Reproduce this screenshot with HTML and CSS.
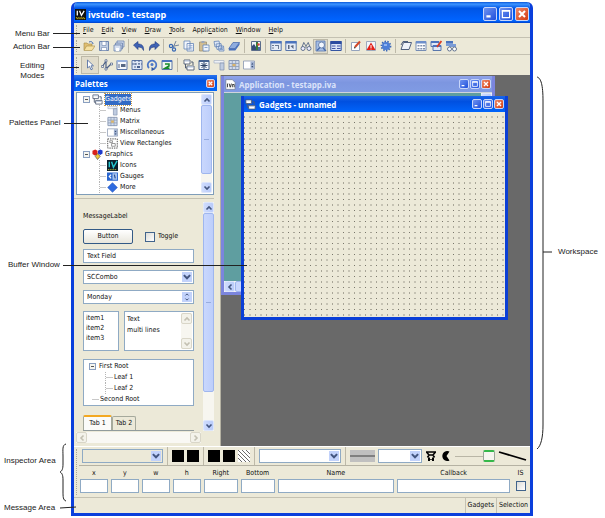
FILE: index.html
```html
<!DOCTYPE html>
<html lang="en">
<head>
  <meta charset="UTF-8">
  <title>ivstudio - testapp</title>
  <meta name="viewport" content="width=device-width, initial-scale=1.0">
  <link rel="stylesheet" href="styles.css">
</head>
<body>
  <!-- icon set -->
  <svg class="sprite" aria-hidden="true">
    <symbol id="i-logo" viewBox="0 0 12 12"><path fill="#111" d="M0 0h12v12H0z"/><path fill="none" stroke="#fff" stroke-width="1.4" d="M2.500 2v5M5 2l2 5 3-5"/><path stroke="#ffe21a" stroke-dasharray="1 1" d="M1 9.500h10M2 10.500h9"/></symbol>
    <symbol id="i-up" viewBox="0 0 8 8"><path fill="none" stroke="currentColor" stroke-width="1.600" d="M1.500 5.500L4 3l2.500 2.500"/></symbol>
    <symbol id="i-down" viewBox="0 0 8 8"><path fill="none" stroke="currentColor" stroke-width="1.600" d="M1.500 2.500L4 5l2.500-2.500"/></symbol>
    <symbol id="i-left" viewBox="0 0 8 8"><path fill="none" stroke="currentColor" stroke-width="1.600" d="M5.500 1.500L3 4l2.500 2.500"/></symbol>
    <symbol id="i-right" viewBox="0 0 8 8"><path fill="none" stroke="currentColor" stroke-width="1.600" d="M2.500 1.500L5 4 2.500 6.500"/></symbol>
    <symbol id="i-min" viewBox="0 0 10 10"><path stroke="#fff" stroke-width="1.800" d="M2 7h3.500"/></symbol>
    <symbol id="i-max" viewBox="0 0 10 10"><path fill="none" stroke="#fff" d="M2 2.500h6v5.500H2z"/><path stroke="#fff" stroke-width="1.400" d="M1.500 2.300h7"/></symbol>
    <symbol id="i-close" viewBox="0 0 10 10"><path stroke="#fff" stroke-width="1.700" d="M2.500 2.500l5 5M7.500 2.500l-5 5"/></symbol>

    <symbol id="i-open" viewBox="0 0 12 12"><path fill="#e0bf73" stroke="#a58945" stroke-width=".6" d="M1 10V3h3l1 1h4v2"/><path fill="#f6e1a2" stroke="#a58945" stroke-width=".6" d="M1 10.500L3.500 6H12l-3 4.500z"/><path fill="none" stroke="#4169b0" d="M6 2c2-1 4 0 4 2"/></symbol>
    <symbol id="i-save" viewBox="0 0 12 12"><path fill="#c2cfe3" stroke="#6d84ad" d="M1.500 1.500h9v9h-9z"/><path fill="#fff" stroke="#6d84ad" stroke-width=".6" d="M4 1.500h4v4H4zM3.500 7.500h5v3h-5z"/></symbol>
    <symbol id="i-saveall" viewBox="0 0 12 12"><path fill="#d5dff0" stroke="#6d84ad" stroke-width=".8" d="M4 1h7v6H4z"/><path fill="#bccae1" stroke="#6d84ad" stroke-width=".8" d="M2.500 3h7v6h-7z"/><path fill="#d5dff0" stroke="#6d84ad" stroke-width=".8" d="M1 5h7v6H1z"/><path fill="#fff" d="M3 8h3v3H3z"/></symbol>
    <symbol id="i-undo" viewBox="0 0 12 12"><path fill="#3e62b4" stroke="#233c80" stroke-width=".6" d="M0.500 5L5 1.500V4c4 0 6 2 5.500 6.500C9.500 8 8 7 5 7v2.500z"/></symbol>
    <symbol id="i-redo" viewBox="0 0 12 12"><path fill="#3e62b4" stroke="#233c80" stroke-width=".6" d="M11.500 5L7 1.500V4c-4 0-6 2-5.500 6.500C2.500 8 4 7 7 7v2.500z"/></symbol>
    <symbol id="i-cut" viewBox="0 0 12 12"><path stroke="#71839d" d="M8 1L5 8M11 5L4 6.500"/><circle cx="3" cy="6" r="1.600" fill="none" stroke="#3768b5" stroke-width="1.200"/><circle cx="6" cy="9.500" r="1.600" fill="none" stroke="#3768b5" stroke-width="1.200"/></symbol>
    <symbol id="i-copy" viewBox="0 0 12 12"><path fill="#f2f6fc" stroke="#6585b8" stroke-width=".8" d="M1 1h6v8H1zM4 3.500h6.500V11H4z"/><path stroke="#8ba6d0" stroke-width=".8" d="M5.500 5.500h4M5.500 7.300h4M5.500 9h4"/></symbol>
    <symbol id="i-paste" viewBox="0 0 12 12"><path fill="#d2bd91" stroke="#9a8a67" stroke-width=".7" d="M1.500 2h7v9h-7z"/><path fill="#9ba6b9" d="M3.500 1h3v2h-3z"/><path fill="#eef3fb" stroke="#6585b8" stroke-width=".8" d="M5 5h6v6H5z"/><path stroke="#8ba6d0" d="M6.500 7.500h3"/></symbol>
    <symbol id="i-dup" viewBox="0 0 12 12"><path fill="#dce6f6" stroke="#6585b8" stroke-width=".8" d="M1 1.500l5-.5 1 5-5 1zM3 4l5-.5 1 5-5 1zM5.500 6h5l.5 5H6z"/><path stroke="#6585b8" stroke-width=".7" d="M7 8h3M7 9.500h3"/></symbol>
    <symbol id="i-eraser" viewBox="0 0 12 12"><path fill="#8eacdf" stroke="#3d61a8" stroke-width=".7" d="M5 2.500h6.500L7 8.500H.8z"/><path fill="#466fbc" d="M.8 8.500H7l4.500-6v2.200L7.300 10.500H.8z"/></symbol>
    <symbol id="i-image" viewBox="0 0 12 12"><path fill="#eef2f8" stroke="#5b6d8b" d="M1.500 1.500h9v9h-9z"/><path fill="#344c79" d="M2 10V6l2-2 2 3v3z"/><path fill="#387c38" d="M6 2h2v8H6z"/><circle cx="8.500" cy="4.500" r="1.300" fill="#d94737"/><path fill="#4a6ca8" d="M8 7h2v3H8z"/></symbol>
    <symbol id="i-form" viewBox="0 0 12 12"><path fill="#e6ecf7" stroke="#5977ac" d="M.8 1.500h10.400v9H.8z"/><path fill="#4b73bd" d="M.5 1h11v2.500H.5z"/><path fill="#6b7a94" d="M2 5h2v1H2zM2 7.500h2v1H2zM5 5h4v4H8V6H5z"/></symbol>
    <symbol id="i-form2" viewBox="0 0 12 12"><path fill="#e6ecf7" stroke="#5977ac" d="M.8 1.500h10.400v9H.8z"/><path fill="#4b73bd" d="M.5 1h11v2.500H.5z"/><path fill="#59677f" d="M3 5h1.500v4H3zM5.500 6l3-1v4z"/></symbol>
    <symbol id="i-find" viewBox="0 0 12 12"><path fill="none" stroke="#64748f" d="M2 7l2-5M10 7L8 2M5 7h2M4 3l2 3 2-3"/><circle cx="3" cy="8.500" r="2" fill="#eef" stroke="#64748f"/><circle cx="9" cy="8.500" r="2" fill="#eef" stroke="#64748f"/></symbol>
    <symbol id="i-inspect" viewBox="0 0 12 12"><path fill="#a5bde4" stroke="#5878b0" stroke-width=".8" d="M1 1h9v10H1z"/><circle cx="6.500" cy="5" r="3" fill="#f2f7ff" stroke="#6b83aa"/><path stroke="#4a6ba8" stroke-width="1.300" d="M5 7.500l-3 3M8 8l3 3"/></symbol>
    <symbol id="i-panels" viewBox="0 0 12 12"><path fill="#dbe5f6" stroke="#3455a2" d="M.8 1.500h10.400v9H.8z"/><path fill="#2c4ca0" d="M.5 1h11v3H.5z"/><path fill="#4457a6" d="M2 5.500h3.500v1H2zM2 8h3.500v1H2zM7 5.500h3.500v1H7zM7 8h3.500v1H7z"/></symbol>
    <symbol id="i-edit" viewBox="0 0 12 12"><path fill="#fff" stroke="#94a3bd" d="M1.500 2.500h8v8h-8z"/><path stroke="#d24828" stroke-width="2" d="M5 7l5-5.500"/><path fill="#333" d="M4 8.500l.3-2L6 8z"/></symbol>
    <symbol id="i-alert" viewBox="0 0 12 12"><path fill="#f2f5fa" stroke="#9daabd" d="M1.500 1.500h9v9h-9z"/><path fill="#e32018" d="M6 2.500L10.500 10h-9z"/><path stroke="#fff" d="M6 5v3M6 8.600v.8"/></symbol>
    <symbol id="i-gear" viewBox="0 0 12 12"><circle cx="6" cy="6" r="4" fill="#4c7fd8"/><circle cx="6" cy="6" r="4.600" fill="none" stroke="#3b68b8" stroke-width="1.600" stroke-dasharray="1.500 1.300"/><path fill="#8fb3ee" d="M4 4h3v2H4z"/></symbol>
    <symbol id="i-box" viewBox="0 0 12 12"><path fill="#eef2fa" stroke="#50607e" d="M3.500 2.500h8L9 9.500H1z"/><path fill="none" stroke="#50607e" d="M1 5l2-3.500h5"/></symbol>
    <symbol id="i-grid" viewBox="0 0 12 12"><path fill="#fff" stroke="#758cb4" d="M1 1.500h10v9H1z"/><path fill="#6e8fca" d="M1 1h10v2.500H1z"/><path fill="#8191ad" d="M2.500 5h2v1.500h-2zM5.300 5h2v1.500h-2zM8 5h2v1.500H8zM2.500 8h2v1.500h-2zM5.300 8h2v1.500h-2zM8 8h2v1.500H8z"/></symbol>
    <symbol id="i-formedit" viewBox="0 0 12 12"><path fill="#dfe8f7" stroke="#5977ac" d="M1 1.500h8v5H1zM3 5.500h8v5H3z"/><path fill="#4b73bd" d="M1 1h8v2H1zM3 5h8v2H3z"/><path stroke="#dc3d22" stroke-width="1.800" d="M7 7l4.500-6"/></symbol>
    <symbol id="i-formfind" viewBox="0 0 12 12"><path fill="#4b73bd" d="M1 1h7v2H1z"/><path fill="#7b9cd6" d="M1 3h7v3H1zM4 4h7v3H4z"/><circle cx="4.500" cy="9" r="2" fill="#fff" stroke="#64748f"/><circle cx="9.500" cy="9" r="2" fill="#fff" stroke="#64748f"/></symbol>

    <symbol id="i-pointer" viewBox="0 0 12 12"><path fill="#fff" stroke="#5873a5" stroke-width=".9" d="M3.500 1v8l2-1.700L7 10.800l1.500-.7L7 6.800h2.500z"/></symbol>
    <symbol id="i-poly" viewBox="0 0 12 12"><path fill="none" stroke="#4c6086" stroke-width="1.200" d="M1.500 7.500L5 2v8l5-5"/><path fill="#fff" stroke="#4c6086" stroke-width=".7" d="M.6 6.500h2v2h-2zM4 .8h2v2H4zM4 9h2v2H4zM9.500 4h2v2h-2z"/></symbol>
    <symbol id="i-attach" viewBox="0 0 12 12"><path fill="#f6f8fc" stroke="#5c77a8" d="M1 1.500h10v9H1z"/><path fill="#9ab2dc" d="M1 1h10v2H1z"/><path fill="#566784" d="M2.500 5h1v4h-1zM5 5h4.500v3H5z"/></symbol>
    <symbol id="i-guide" viewBox="0 0 12 12"><path fill="#dfe7f5" stroke="#5c77a8" d="M1 1.500h10v9H1z"/><path stroke="#4b628f" stroke-dasharray="2 1" d="M4 1v10M1 5h10M8 1v4"/><path fill="#4b628f" d="M6 7h3v2H6z"/></symbol>
    <symbol id="i-focus" viewBox="0 0 12 12"><path fill="none" stroke="#4d77c6" stroke-width="1.800" d="M3 9a4.300 4.300 0 1 1 5 .8"/><path fill="#2f57a5" d="M5.500 8v4l3.500-1.700z"/><circle cx="6" cy="5.500" r="1.500" fill="#4d77c6"/></symbol>
    <symbol id="i-two" viewBox="0 0 12 12"><path fill="#f0f6ef" stroke="#5c77a8" d="M1 1.500h10v9H1z"/><path fill="#4b73bd" d="M1 1h10v2H1z"/><path fill="none" stroke="#168a2b" stroke-width="1.500" d="M4 5h4v2L4 9.300h4.500"/></symbol>
    <symbol id="i-gadgets" viewBox="0 0 12 12"><path fill="#fff" stroke="#515e74" stroke-width=".9" d="M1 1h6v4H1zM4 7h7v4H4z"/><path fill="#aebfd9" d="M1.500 1.500h5v1h-5zM4.500 7.500h6v1h-6z"/><path fill="none" stroke="#515e74" d="M8 3h2v3M2.500 5v4H4"/></symbol>
    <symbol id="i-spark" viewBox="0 0 12 12"><path fill="#f3f6fb" stroke="#46628f" d="M1 1.500h10v9H1z"/><path fill="#46628f" d="M1 1h10v2H1z"/><path stroke="#2f4468" d="M6 3v7M2.500 6.500h7M3.500 4l5 5M8.500 4l-5 5"/></symbol>
    <symbol id="i-menus" viewBox="0 0 12 12"><path fill="#eef1f6" stroke="#a8b3c5" stroke-width=".7" d="M1 1.500h10V4H1z"/><path fill="#bfcce1" stroke="#8191ad" stroke-width=".7" d="M7 4h4v7H7z"/></symbol>
    <symbol id="i-matrix" viewBox="0 0 12 12"><path fill="#d2ddee" stroke="#8b9ab4" d="M1 1.500h10v9H1z"/><path stroke="#8b9ab4" stroke-width=".8" d="M4.300 1v10M7.700 1v10M1 4.500h10M1 7.500h10"/><path fill="#dbb469" d="M4.500 5h3v2.300h-3z"/></symbol>
    <symbol id="i-misc" viewBox="0 0 12 12"><path fill="#fff" stroke="#8896b0" stroke-width=".8" d="M.5 2h11v8H.5z"/><path fill="#9fb0d0" d="M7.500 2.500h3.500v7H7.500z"/><path fill="#304569" d="M8.300 5.500L9.300 4l1 1.500zM8.300 7l1 1.500 1-1.500z"/></symbol>
    <symbol id="i-rects" viewBox="0 0 12 12"><path fill="none" stroke="#444" stroke-dasharray="1.500 1" d="M.8 1h10.400v10H.8z"/><path fill="#fff" stroke="#777" stroke-width=".8" d="M3 3h3v2H3zM5 6h4v3H5z"/></symbol>
    <symbol id="i-shapes" viewBox="0 0 12 12"><path fill="#d9231b" d="M.5 2l3-1.500L6 2v4L3 7 .5 5.500z"/><path fill="#1f3ccc" d="M6.500 2L9 .5l2.500 1V5L9 6.500 6.500 5z"/><path fill="#f0c83a" stroke="#333" stroke-width=".6" d="M6 5l3 3-3 3.500L3.500 8z"/></symbol>
    <symbol id="i-icons" viewBox="0 0 12 12"><path fill="#0b1f2c" d="M0 0h12v12H0z"/><path fill="none" stroke="#25c7d0" stroke-width="1.500" d="M2.500 2v6M5 2l2 6 4-7"/><path stroke="#e8e23a" stroke-dasharray="1 1" d="M1 10.500h10"/></symbol>
    <symbol id="i-gauge" viewBox="0 0 12 12"><path fill="#2a66cf" d="M0 1.500h12v9H0z"/><path fill="#a8c5f0" d="M6 2.500h5v7H6z"/><path fill="none" stroke="#fff" stroke-width="1.300" d="M4.500 4L2.500 6l2 2"/><path stroke="#2a4c90" stroke-width="1.300" d="M8 4l1 4"/></symbol>
    <symbol id="i-more" viewBox="0 0 12 12"><path fill="#2e6be0" stroke="#1b4eb5" stroke-width=".6" d="M6 .7L11.300 6 6 11.300.7 6z"/></symbol>
    <symbol id="i-doc" viewBox="0 0 12 12"><path fill="#fff" stroke="#707a8c" stroke-width=".7" d="M1 .7h7l3 3v7.600H1z"/><path fill="none" stroke="#333" d="M2.700 5v4M4.500 5l1.200 4L7 5M8 9V6h2v3"/></symbol>
  </svg>

  <div class="figure">
    <div class="captions"></div>

    <div class="app">
      <header class="titlebar">
        <svg class="ico"><use href="#i-logo"/></svg>
        <h1>ivstudio - testapp</h1>
        <div class="winbtns big">
          <button aria-label="Minimize"><svg><use href="#i-min"/></svg></button>
          <button aria-label="Maximize"><svg><use href="#i-max"/></svg></button>
          <button class="close" aria-label="Close"><svg><use href="#i-close"/></svg></button>
        </div>
      </header>

      <nav class="bar menubar">
        <span class="grip"></span>
        <button><u>F</u>ile</button>
        <button><u>E</u>dit</button>
        <button><u>V</u>iew</button>
        <button><u>D</u>raw</button>
        <button><u>T</u>ools</button>
        <button>Appli<u>c</u>ation</button>
        <button><u>W</u>indow</button>
        <button><u>H</u>elp</button>
      </nav>

      <div class="bar actions">
        <span class="grip"></span>
        <button aria-label="Open"><svg><use href="#i-open"/></svg></button>
        <button aria-label="Save"><svg><use href="#i-save"/></svg></button>
        <button aria-label="Save all"><svg><use href="#i-saveall"/></svg></button>
        <span class="sep"></span>
        <button aria-label="Undo"><svg><use href="#i-undo"/></svg></button>
        <button aria-label="Redo"><svg><use href="#i-redo"/></svg></button>
        <span class="sep"></span>
        <button aria-label="Cut"><svg><use href="#i-cut"/></svg></button>
        <button aria-label="Copy"><svg><use href="#i-copy"/></svg></button>
        <button aria-label="Paste"><svg><use href="#i-paste"/></svg></button>
        <button aria-label="Duplicate"><svg><use href="#i-dup"/></svg></button>
        <button aria-label="Delete"><svg><use href="#i-eraser"/></svg></button>
        <span class="sep wide"></span>
        <button aria-label="Image"><svg><use href="#i-image"/></svg></button>
        <span class="sep"></span>
        <button aria-label="Gadget palette"><svg><use href="#i-form"/></svg></button>
        <button aria-label="Inspector"><svg><use href="#i-form2"/></svg></button>
        <button aria-label="Find"><svg><use href="#i-find"/></svg></button>
        <button class="on" aria-label="Zoom"><svg><use href="#i-inspect"/></svg></button>
        <button aria-label="Panels"><svg><use href="#i-panels"/></svg></button>
        <span class="sep"></span>
        <button aria-label="Edit"><svg><use href="#i-edit"/></svg></button>
        <button aria-label="Errors"><svg><use href="#i-alert"/></svg></button>
        <button aria-label="Generate"><svg><use href="#i-gear"/></svg></button>
        <span class="sep"></span>
        <button aria-label="New panel"><svg><use href="#i-box"/></svg></button>
        <button aria-label="Grid"><svg><use href="#i-grid"/></svg></button>
        <button aria-label="Edit panel"><svg><use href="#i-formedit"/></svg></button>
        <button aria-label="Find panel"><svg><use href="#i-formfind"/></svg></button>
      </div>

      <div class="bar modes">
        <span class="grip"></span>
        <button class="on" aria-label="Selection"><svg><use href="#i-pointer"/></svg></button>
        <button aria-label="Polyline"><svg><use href="#i-poly"/></svg></button>
        <button aria-label="Attachments"><svg><use href="#i-attach"/></svg></button>
        <button aria-label="Guides"><svg><use href="#i-guide"/></svg></button>
        <button aria-label="Focus"><svg><use href="#i-focus"/></svg></button>
        <button aria-label="Order"><svg><use href="#i-two"/></svg></button>
        <span class="sep wide"></span>
        <button aria-label="Gadgets"><svg><use href="#i-gadgets"/></svg></button>
        <button aria-label="Connections"><svg><use href="#i-spark"/></svg></button>
        <button aria-label="Menus"><svg><use href="#i-menus"/></svg></button>
        <button aria-label="Matrix"><svg><use href="#i-matrix"/></svg></button>
        <button aria-label="Miscellaneous"><svg><use href="#i-misc"/></svg></button>
      </div>

      <div class="main">
        <aside class="palettes">
          <div class="pal-title">
            <h2>Palettes</h2>
            <button class="close" aria-label="Close palettes"><svg><use href="#i-close"/></svg></button>
          </div>

          <div class="tree-box">
            <ul class="tree">
              <li><i class="toggle"></i><svg><use href="#i-gadgets"/></svg><span class="sel">Gadgets</span></li>
              <li class="child"><svg><use href="#i-menus"/></svg>Menus</li>
              <li class="child"><svg><use href="#i-matrix"/></svg>Matrix</li>
              <li class="child"><svg><use href="#i-misc"/></svg>Miscellaneous</li>
              <li class="child"><svg><use href="#i-rects"/></svg>View Rectangles</li>
              <li><i class="toggle"></i><svg><use href="#i-shapes"/></svg><span>Graphics</span></li>
              <li class="child"><svg><use href="#i-icons"/></svg>Icons</li>
              <li class="child"><svg><use href="#i-gauge"/></svg>Gauges</li>
              <li class="child"><svg><use href="#i-more"/></svg>More</li>
            </ul>
            <div class="vscroll">
              <button aria-label="Scroll up"><svg><use href="#i-up"/></svg></button>
              <span class="thumb"></span>
              <button aria-label="Scroll down"><svg><use href="#i-down"/></svg></button>
            </div>
          </div>

          <div class="preview">
            <div class="samples">
              <p>MessageLabel</p>
              <div class="row">
                <button class="push">Button</button>
                <label class="check"><input type="checkbox">Toggle</label>
              </div>
              <input class="field" type="text" value="Text Field" aria-label="Text field">
              <div class="combo">
                <select aria-label="Combo"><option>SCCombo</option></select>
                <svg><use href="#i-down"/></svg>
              </div>
              <div class="combo spin">
                <input type="text" value="Monday" aria-label="Day">
                <span><svg><use href="#i-up"/></svg><svg><use href="#i-down"/></svg></span>
              </div>
              <div class="row lists">
                <ul class="list"><li>item1</li><li>item2</li><li>item3</li></ul>
                <div class="multi">
                  <textarea aria-label="Text">Text
multi lines</textarea>
                  <div class="vscroll off">
                    <button aria-label="Scroll up"><svg><use href="#i-up"/></svg></button>
                    <button aria-label="Scroll down"><svg><use href="#i-down"/></svg></button>
                  </div>
                </div>
              </div>
              <ul class="roots">
                <li><i class="toggle"></i>First Root</li>
                <li class="leaf">Leaf 1</li>
                <li class="leaf">Leaf 2</li>
                <li class="last">Second Root</li>
              </ul>
              <div class="tabs">
                <button class="active">Tab 1</button>
                <button>Tab 2</button>
              </div>
              <div class="tab-page"></div>
            </div>
            <div class="vscroll">
              <button aria-label="Scroll up"><svg><use href="#i-up"/></svg></button>
              <span class="thumb long"></span>
              <button aria-label="Scroll down"><svg><use href="#i-down"/></svg></button>
            </div>
          </div>
          <div class="hscroll off">
            <button aria-label="Scroll left"><svg><use href="#i-left"/></svg></button>
            <button aria-label="Scroll right"><svg><use href="#i-right"/></svg></button>
          </div>
        </aside>

        <main class="workspace">
          <section class="win inactive">
            <div class="win-title">
              <svg class="ico"><use href="#i-doc"/></svg>
              <h2>Application - testapp.iva</h2>
              <div class="winbtns">
                <button aria-label="Minimize"><svg><use href="#i-min"/></svg></button>
                <button aria-label="Maximize"><svg><use href="#i-max"/></svg></button>
                <button class="close" aria-label="Close"><svg><use href="#i-close"/></svg></button>
              </div>
            </div>
            <div class="win-body">
              <div class="teal"></div>
              <div class="vscroll">
                <button aria-label="Scroll up"><svg><use href="#i-up"/></svg></button>
                <span class="thumb"></span>
              </div>
            </div>
            <div class="hscroll">
              <button aria-label="Scroll left"><svg><use href="#i-left"/></svg></button>
              <span class="thumb"></span>
            </div>
          </section>

          <section class="win active">
            <div class="win-title">
              <svg class="ico"><use href="#i-gadgets"/></svg>
              <h2>Gadgets - unnamed</h2>
              <div class="winbtns">
                <button aria-label="Minimize"><svg><use href="#i-min"/></svg></button>
                <button aria-label="Maximize"><svg><use href="#i-max"/></svg></button>
                <button class="close" aria-label="Close"><svg><use href="#i-close"/></svg></button>
              </div>
            </div>
            <svg class="dots">
              <defs>
                <pattern id="grid" width="11" height="11" patternUnits="userSpaceOnUse">
                  <path fill="#77756a" d="M0 10h1v1H0z"/>
                  <path fill="#a9a698" d="M5 10h2v1H5zM0 4h1v2H0z"/>
                  <path fill="#c6c3b4" d="M5 4h2v2H5z"/>
                </pattern>
              </defs>
              <rect width="100%" height="100%" fill="url(#grid)"/>
            </svg>
          </section>
        </main>
      </div>

      <div class="inspector">
        <span class="grip"></span>
        <div class="props">
          <div class="attrs">
            <div class="combo gray"><select aria-label="Font"><option></option></select><svg><use href="#i-down"/></svg></div>
            <span class="sep"></span>
            <button class="swatch" aria-label="Foreground"></button>
            <button class="swatch" aria-label="Background"></button>
            <span class="sep"></span>
            <button class="swatch" aria-label="Line color"></button>
            <button class="swatch" aria-label="Fill color"></button>
            <button class="swatch hatch" aria-label="Pattern"><svg viewBox="0 0 12 12"><path stroke="#444" stroke-width=".8" d="M0 0l12 12M4 0l8 8M8 0l4 4M0 4l8 8M0 8l4 4"/></svg></button>
            <span class="sep"></span>
            <div class="combo"><select aria-label="Pattern name"><option></option></select><svg><use href="#i-down"/></svg></div>
            <span class="sep"></span>
            <button class="linestyle" aria-label="Line style"><i></i></button>
            <div class="combo narrow"><select aria-label="Line width"><option></option></select><svg><use href="#i-down"/></svg></div>
            <button class="shape" aria-label="Fill rule"><svg viewBox="0 0 12 12"><path fill="none" stroke="#000" stroke-width="1.600" d="M1 2h10M1.500 2L4 5h4l2.500-3M4 5L2.500 7.500M8 5l1.500 2.500"/><path fill="#000" d="M3 7.500h2V9h2V7.500h2V11H7V9.800H5V11H3z"/></svg></button>
            <button class="shape" aria-label="Arc mode"><svg viewBox="0 0 12 12"><path fill="#000" d="M9.500 1.500A5 5 0 1 0 9.500 10.500L6.500 6z"/></svg></button>
            <input class="slider" type="range" min="0" max="100" value="100" aria-label="Alpha">
            <svg class="line" viewBox="0 0 29 12"><path stroke="#000" stroke-width="1.800" d="M1 2l27 8"/></svg>
          </div>
          <div class="coords">
            <label>x<input type="text"></label>
            <label>y<input type="text"></label>
            <label>w<input type="text"></label>
            <label>h<input type="text"></label>
            <label>Right<input type="text"></label>
            <label>Bottom<input type="text"></label>
            <label>Name<input type="text"></label>
            <label>Callback<input type="text"></label>
            <label>IS<input type="checkbox"></label>
          </div>
        </div>
      </div>

      <footer class="status">
        <span class="msg"></span>
        <span>Gadgets</span>
        <span>Selection</span>
      </footer>
    </div>

    <div class="captions right">
      <svg class="brace-right" viewBox="0 0 20 376"><path d="M4 2C8 3 10 10 10 26V350C10 362 8 371 4 374M10 177h9"/></svg>
      <span class="note workspace-note">Workspace</span>
    </div>

    <!-- callouts drawn over the window -->
    <span class="note n-menu">Menu Bar</span>
    <span class="note n-action">Action Bar</span>
    <span class="note n-modes">Editing<br>Modes</span>
    <span class="note n-palettes">Palettes Panel</span>
    <span class="note n-buffer">Buffer Window</span>
    <span class="note n-inspector">Inspector Area</span>
    <span class="note n-message">Message Area</span>
    <svg class="leaders top" viewBox="0 0 250 270"><path d="M53 33.500h27M53 47.500h27M61 67.500h18M64 123.500h24M63 265.500h184"/></svg>
    <svg class="leaders bottom" viewBox="0 0 80 80"><path d="M66 6C62 7 63 12 63 18V26C63 31 62 33 60 34C62 35 63 37 63 42V53C63 59 63 62 66 63M60 70l16-1"/></svg>
  </div>
</body>
</html>
```
FILE: styles.css
```css
* {
  box-sizing: border-box;
}

body {
  margin: 0;
  background: #fff;
  color: #111;
  font-family: "DejaVu Sans Condensed", "DejaVu Sans", sans-serif;
  font-size: 7px;
  line-height: 11px;
}

button, input, select, textarea {
  font: inherit;
  color: inherit;
  margin: 0;
  padding: 0;
  border: none;
  background: none;
  border-radius: 0;
  min-width: 0;
}

h1, h2, p, ul {
  margin: 0;
  padding: 0;
  list-style: none;
}

.sprite {
  position: absolute;
  width: 0;
  height: 0;
}

.figure {
  position: relative;
  display: grid;
  grid-template-columns: 71px 1fr 72px;
  height: 100vh;
  min-height: 400px;
  padding: 2px 0;
}

/* main window */
.app {
  display: flex;
  flex-direction: column;
  min-width: 0;
  min-height: 0;
  background: #ece9d8;
  border: 3px solid #0a3fdc;
  border-top: none;
  border-radius: 6px 6px 0 0;
  overflow: hidden;
}

.titlebar {
  display: flex;
  align-items: center;
  gap: 2px;
  height: 21px;
  flex: none;
  padding: 3px 1px 0 1px;
  background: linear-gradient(#0a57d8, #3d94ff 10%, #0055e5 30%, #0060fa 75%, #0066ff 90%, #0040c8);
  color: #fff;
}

h1, h2 {
  flex: 1;
  font-family: "Open Sans", "DejaVu Sans", sans-serif;
  font-size: 8px;
  font-weight: bold;
  white-space: nowrap;
}

.titlebar h1 {
  font-size: 9px;
}

.ico {
  width: 11px;
  height: 11px;
  flex: none;
}

.winbtns {
  display: flex;
  gap: 1px;
}

.winbtns button, .close {
  display: flex;
  width: 10px;
  height: 10px;
  border: 1px solid #c8d6fa;
  border-radius: 2px;
  background: linear-gradient(135deg, #6f93f0, #1f4fdc);
}

.winbtns svg, .close svg {
  width: 100%;
  height: 100%;
}

.winbtns .close, .close {
  background: linear-gradient(135deg, #f08a68, #d33c12);
}

.winbtns.big {
  gap: 2px;
}

.winbtns.big button {
  width: 14px;
  height: 14px;
}

/* bars */
.bar {
  display: flex;
  align-items: center;
  flex: none;
  padding-left: 2px;
  border-bottom: 1px solid #c4c1b2;
}

.grip {
  width: 2px;
  align-self: stretch;
  margin: 2px 3px 2px 0;
  border-left: 1px dotted #aca899;
}

.menubar {
  height: 15px;
  gap: 8px;
}

.menubar .grip {
  margin-right: -3px;
}

.actions {
  height: 17px;
}

.modes {
  height: 20px;
  border-bottom: none;
}

.actions button, .modes button {
  display: flex;
  align-items: center;
  justify-content: center;
  width: 15px;
  height: 15px;
}

.bar svg {
  width: 12px;
  height: 12px;
}

.bar button.on {
  background: #e1dccb;
  border: 1px solid #bdb9a8;
}

.modes button.on {
  width: 18px;
  height: 18px;
}

.sep {
  flex: none;
  width: 1px;
  height: 14px;
  margin: 0 2px;
  background: #bdb9a8;
}

.sep.wide {
  margin: 0 3px;
}

/* palettes */
.main {
  display: flex;
  flex: 1;
  min-height: 0;
}

.palettes {
  display: flex;
  flex-direction: column;
  width: 147px;
  flex: none;
  min-height: 0;
  border-right: 1px solid #b5b2a3;
}

.pal-title {
  display: flex;
  align-items: center;
  height: 16px;
  flex: none;
  margin-right: 3px;
  padding: 0 2px 0 1px;
  background: linear-gradient(#2b74ee, #0053e0 35%, #0064fa);
  color: #fff;
}

.pal-title .close {
  width: 9px;
  height: 9px;
}

.tree-box {
  display: flex;
  flex: none;
  height: 103px;
  margin: 1px 6px 3px 2px;
  padding: 1px;
  border: 1px solid #7f9db9;
  background: #fff;
}

.tree {
  flex: 1;
  padding-left: 5px;
}

.tree li {
  display: flex;
  align-items: center;
  gap: 2px;
  height: 11px;
  white-space: nowrap;
}

.tree svg {
  width: 11px;
  height: 11px;
}

.tree .child {
  margin-left: 16px;
  padding-left: 7px;
  border-left: 1px dotted #b5b5b5;
  background: linear-gradient(90deg, #c8c8c8 6px, transparent 6px) 0 5px / 100% 1px no-repeat;
}

.tree .sel {
  background: #316ac5;
  color: #fff;
  outline: 1px dotted #c89b4a;
}

.toggle {
  width: 7px;
  height: 7px;
  border: 1px solid #8a9fc0;
  background: linear-gradient(#555, #555) center / 3px 1px no-repeat #f5f5f0;
}

.vscroll {
  display: flex;
  flex-direction: column;
  justify-content: space-between;
  width: 11px;
  flex: none;
  background: #f7f6f0;
}

.vscroll button, .hscroll button, .thumb {
  display: flex;
  align-items: center;
  justify-content: center;
  flex: none;
  width: 11px;
  height: 11px;
  border: 1px solid #dde6fc;
  border-radius: 2px;
  background: linear-gradient(90deg, #cfdcfd, #b9cbfa);
  color: #43557f;
}

.vscroll svg, .hscroll svg {
  width: 8px;
  height: 8px;
}

.thumb {
  height: auto;
  flex: 1;
  border-color: #9fb6ee;
  background: linear-gradient(#97acdf, #97acdf) center / 5px 1px no-repeat, linear-gradient(90deg, #c9d7fd, #bdcefb);
}

.tree-box .thumb {
  flex: 0 1 69px;
  margin-bottom: auto;
}

.vscroll.off button, .hscroll.off button {
  background: #f3f2ea;
  border-color: #d9d6c8;
  color: #c3c0b2;
}

.preview {
  display: flex;
  flex: 1;
  min-height: 0;
  margin-right: 6px;
  padding-top: 3px;
  border-top: 1px solid #c4c1b2;
}

.thumb.long {
  flex: 0 1 78%;
  margin-bottom: auto;
}

.samples {
  flex: 1;
  min-width: 0;
  overflow: hidden;
  padding: 9px 9px 0 9px;
}

.row {
  display: flex;
  align-items: center;
  gap: 12px;
  margin: 7px 0 5px;
}

.push {
  width: 50px;
  height: 15px;
  border: 1px solid #335a86;
  border-radius: 2px;
  background: linear-gradient(#fff, #e8e6dc);
}

.check {
  display: flex;
  align-items: center;
  gap: 3px;
}

input[type="checkbox"] {
  appearance: none;
  width: 10px;
  height: 10px;
  border: 1px solid #41648c;
  background: linear-gradient(135deg, #dcdcd7, #fff);
}

.field, .combo, .list, .multi, .roots, .coords input[type="text"] {
  display: block;
  width: 100%;
  border: 1px solid #8faac4;
  background: #fff;
}

.field {
  height: 14px;
  padding: 0 3px;
}

.combo {
  display: flex;
  align-items: center;
  height: 14px;
  padding: 0 1px 0 3px;
}

.samples .combo {
  margin-top: 7px;
}

.samples .spin {
  margin-top: 6px;
}

.combo select, .combo input {
  flex: 1;
  width: 0;
  appearance: none;
}

.combo > svg, .combo > span {
  flex: none;
  width: 10px;
  height: 10px;
  background: #c2d2fb;
  color: #43557f;
}

.combo > span {
  display: flex;
  flex-direction: column;
}

.combo > span svg {
  width: 10px;
  height: 5px;
}

.lists {
  align-items: stretch;
  gap: 5px;
  height: 40px;
  margin: 7px 0 8px;
}

.list {
  width: 36px;
  flex: none;
  padding: 1px 2px;
  line-height: 10px;
}

.multi {
  display: flex;
  flex: 1;
  padding: 1px;
}

.multi textarea {
  flex: 1;
  width: 0;
  padding: 1px;
  resize: none;
  overflow: hidden;
}

.roots {
  height: 47px;
  padding: 1px 4px;
}

.roots li {
  display: flex;
  align-items: center;
  gap: 3px;
  height: 11px;
}

.roots .toggle {
  margin-left: 1px;
}

.roots .leaf {
  margin-left: 17px;
  padding-left: 8px;
  border-left: 1px dotted #b5b5b5;
  background: linear-gradient(90deg, #c8c8c8 7px, transparent 7px) 0 5px / 100% 1px no-repeat;
}

.roots .last {
  margin-left: 4px;
  padding-left: 8px;
  background: linear-gradient(90deg, #c8c8c8 7px, transparent 7px) 0 5px / 100% 1px no-repeat;
}

.tabs {
  display: flex;
  align-items: flex-end;
  margin-top: 9px;
}

.tabs button {
  width: 24px;
  height: 14px;
  border: 1px solid #a5a99c;
  border-bottom: none;
  border-radius: 2px 2px 0 0;
}

.tabs .active {
  width: 29px;
  height: 15px;
  border-top: 2px solid #f3a821;
  background: #fbfbf9;
}

.tab-page {
  height: 20px;
  border: 1px solid #919b9c;
  background: #fbfbf9;
}

.hscroll {
  display: flex;
  justify-content: space-between;
  flex: none;
  height: 11px;
  background: #f9f8f4;
}

.palettes > .hscroll {
  margin: 1px 19px 3px 2px;
}

/* workspace */
.workspace {
  position: relative;
  flex: 1;
  min-width: 0;
  background: #696969;
  overflow: hidden;
}

.win {
  position: absolute;
  display: flex;
  flex-direction: column;
}

.win.inactive {
  top: 1px;
  left: 0;
  width: 274px;
  height: 219px;
  border: 3px solid #7b85dd;
  border-top: none;
}

.win.active {
  top: 21px;
  left: 20px;
  width: 267px;
  height: 224px;
  border: 3px solid #0b3fd6;
  border-top: none;
  background: #ece9d8;
}

.win-title {
  display: flex;
  align-items: center;
  gap: 3px;
  height: 16px;
  flex: none;
  padding: 0 1px;
  color: #fff;
}

.active .win-title {
  background: linear-gradient(#1c66e8, #0050e0 35%, #0064fa);
}

.inactive .win-title {
  background: linear-gradient(#8fa3ea, #7d96e0 40%, #809be4);
  color: #dbe3fa;
}

.win-body {
  display: flex;
  flex: 1;
  border-top: 1px solid #cfd4dc;
}

.teal {
  flex: 1;
  background: #5f9ea0;
}

.dots {
  flex: 1;
  width: 100%;
  min-height: 0;
}

/* inspector */
.inspector {
  display: flex;
  flex: none;
  padding-left: 2px;
  border-top: 1px solid #fff;
  border-bottom: 1px solid #c4c1b2;
}

.inspector > .grip {
  margin-right: 1px;
}

.props {
  flex: 1;
  min-width: 0;
}

.attrs {
  display: flex;
  align-items: center;
  gap: 3px;
  height: 19px;
  padding: 0 3px;
  border-bottom: 1px solid #b5b2a3;
}

.attrs .combo {
  flex: 83 1 0;
  width: auto;
  min-width: 0;
}

.attrs .combo.gray {
  background: #ece9d8;
}

.attrs .combo.narrow {
  flex: 42 1 0;
}

.attrs .sep {
  height: 18px;
  margin: 0 1px;
}

.swatch {
  width: 12px;
  height: 12px;
  flex: none;
  background: #000;
}

.hatch {
  display: flex;
  background: #fff;
}

.linestyle {
  display: flex;
  align-items: center;
  width: 25px;
  height: 12px;
  flex: none;
  background: #c0c0c0;
}

.linestyle i {
  flex: 1;
  height: 2px;
  background: #808080;
}

.shape {
  display: flex;
  width: 12px;
  height: 12px;
  flex: none;
}

.slider {
  appearance: none;
  width: 40px;
  height: 12px;
  flex: none;
  background: linear-gradient(#b9b6a6, #b9b6a6) center / 100% 1px no-repeat;
}

.slider::-webkit-slider-thumb {
  appearance: none;
  width: 12px;
  height: 12px;
  border: 1px solid #9aa69a;
  border-top: 2px solid #35b84a;
  border-bottom: 2px solid #35b84a;
  border-radius: 2px;
  background: #f6f5ef;
}

.line {
  width: 29px;
  height: 12px;
  flex: none;
}

.coords {
  display: grid;
  grid-template-columns: 28fr 28fr 28fr 28fr 34fr 34fr 117fr 113fr 15px;
  gap: 3px;
  padding: 2px 2px 4px 1px;
}

.coords label {
  display: flex;
  flex-direction: column;
  align-items: center;
  min-width: 0;
}

.coords input[type="text"] {
  height: 14px;
}

.coords input[type="checkbox"] {
  margin-top: 2px;
}

.status {
  display: flex;
  flex: none;
  height: 15px;
  line-height: 15px;
}

.status span {
  padding: 0 2px;
  border-left: 1px solid #c4c1b2;
}

.status .msg {
  flex: 1;
  border-left: none;
}

/* callouts */
.captions {
  position: relative;
}

.note {
  position: absolute;
  font-family: "Liberation Sans", Arial, sans-serif;
  font-size: 8px;
  line-height: 10px;
  color: #222;
  white-space: nowrap;
}

.n-menu { top: 29px; left: 15px; }
.n-action { top: 42px; left: 13px; }
.n-modes { top: 61px; left: 20px; text-align: center; }
.n-palettes { top: 118px; left: 9px; }
.n-buffer { top: 260px; left: 8px; }
.n-inspector { bottom: 52px; left: 4px; }
.n-message { bottom: 5px; left: 4px; }
.workspace-note { top: 245px; left: 25px; }

.leaders, .brace-right {
  position: absolute;
  left: 0;
  fill: none;
  stroke: #222;
  stroke-width: 1;
  pointer-events: none;
}

.leaders.top {
  top: 0;
  width: 250px;
  height: 270px;
}

.leaders.bottom {
  bottom: 0;
  width: 80px;
  height: 80px;
}

.brace-right {
  top: 73px;
  width: 20px;
  height: 376px;
}
```
